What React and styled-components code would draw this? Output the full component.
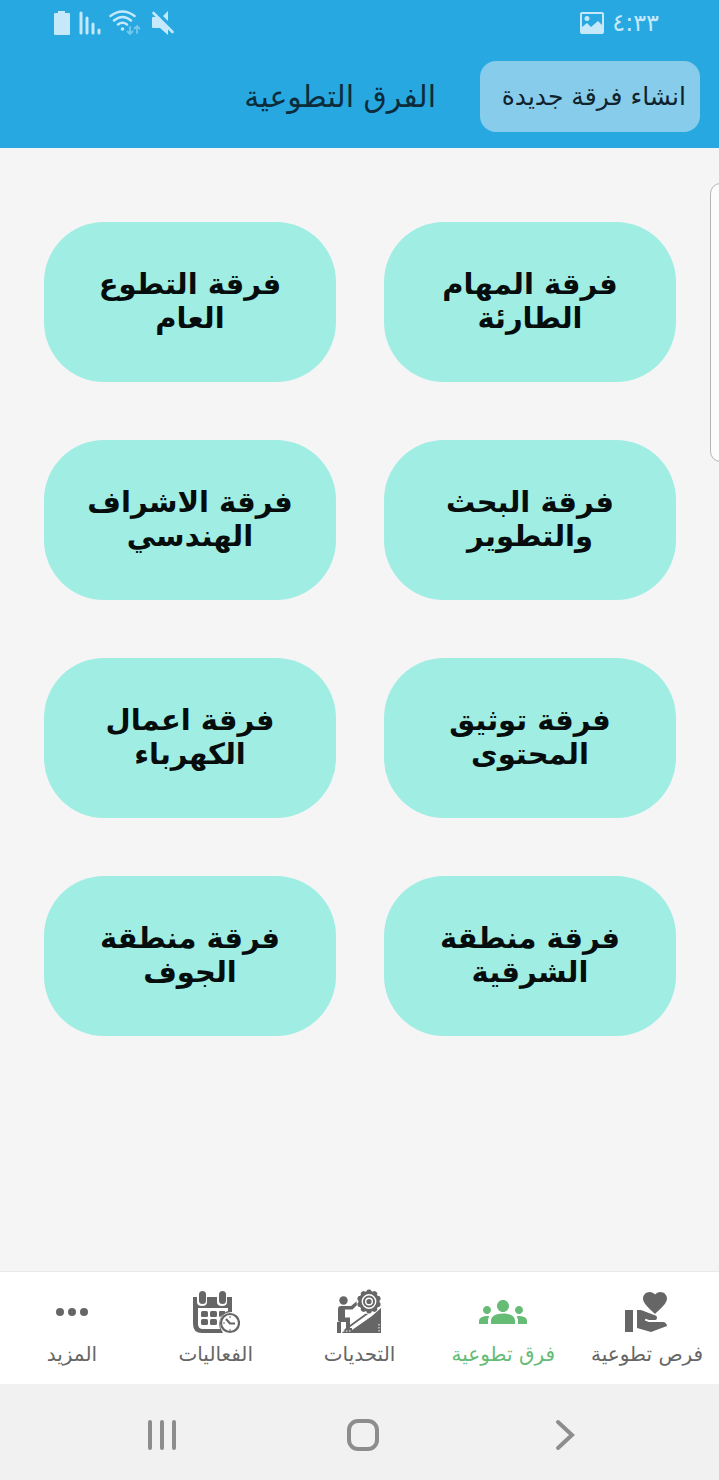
import React from "react";
import styled, { createGlobalStyle } from "styled-components";
import { MdGroups, MdVolunteerActivism } from "react-icons/md";

const GlobalStyle = createGlobalStyle`
  *, *::before, *::after { box-sizing: border-box; }
  body { margin: 0; background: #f5f5f5; font-family: "DejaVu Sans", sans-serif; }
  button { font: inherit; color: inherit; border: 0; margin: 0; cursor: pointer; }
`;

const Screen = styled.div`
  min-height: 100vh;
  display: flex;
  flex-direction: column;
  overflow-x: hidden;
`;

const TopBar = styled.header`
  background: #27a8e1;
  height: 148px;
`;

const StatusBar = styled.div`
  display: flex;
  align-items: center;
  justify-content: space-between;
  height: 46px;
  padding: 0 60px 0 53px;
  color: #c5e9fb;
  direction: ltr;
`;

const StatusGroup = styled.div`
  display: flex;
  align-items: center;
  gap: 8px;
`;

const Clock = styled.time`
  font-size: 24px;
  line-height: 24px;
  direction: ltr;
`;

const TitleRow = styled.div`
  display: flex;
  align-items: center;
  gap: 44px;
  padding: 15px 19px 0;
`;

const CreateButton = styled.button`
  width: 220px;
  height: 71px;
  padding: 0 14px;
  border-radius: 16px;
  background: #87cdeb;
  color: #10222c;
  font-size: 25px;
  line-height: 32px;
  text-align: start;
  white-space: nowrap;
`;

const Title = styled.h1`
  margin: 0;
  color: #0d2c3b;
  font-size: 30px;
  font-weight: 400;
  line-height: 36px;
  white-space: nowrap;
`;

const Main = styled.main`
  flex: 1;
  position: relative;
  padding: 74px 43px 74px 44px;
`;

const EdgePanel = styled.div`
  position: absolute;
  top: 35px;
  right: -12px;
  width: 21px;
  height: 279px;
  border: 1px solid #b4b4b4;
  border-radius: 12px;
  background: #fcfcfc;
`;

const TeamGrid = styled.div`
  display: grid;
  grid-template-columns: 1fr 1fr;
  gap: 58px 48px;
`;

const TeamCard = styled.button`
  height: 160px;
  padding: 0 16px 2px;
  border-radius: 60px;
  background: #a0ede4;
  color: #060d0c;
  font-size: 29px;
  font-weight: 700;
  line-height: 34px;
  white-space: pre-line;
`;

const TabBar = styled.nav`
  display: grid;
  grid-template-columns: repeat(5, 1fr);
  height: 113px;
  background: #fff;
  border-top: 1px solid #e9e9e9;
`;

const Tab = styled.a`
  display: flex;
  flex-direction: column;
  align-items: center;
  gap: 2px;
  padding-top: 16px;
  color: ${(p) => (p.$active ? "#66bb75" : "#666")};
  text-decoration: none;
  font-size: 20px;
  line-height: 32px;
  white-space: nowrap;
  svg { display: block; width: 48px; height: 48px; }
`;

const SystemBar = styled.div`
  display: flex;
  align-items: center;
  justify-content: space-between;
  height: 96px;
  padding: 6px 130px 0 138px;
  background: #f1f1f1;
  direction: ltr;
`;

const SystemButton = styled.button`
  width: 48px;
  height: 48px;
  padding: 0;
  background: none;
  svg { display: block; width: 48px; height: 48px; }
`;

const Battery = () => (
  <svg width="18" height="26" viewBox="0 0 18 26" fill="currentColor" aria-hidden="true">
    <path d="M5 1h7v2h4q1 0 1 1v20q0 1-1 1H2q-1 0-1-1V4q0-1 1-1h3z" />
  </svg>
);

const Signal = () => (
  <svg width="22" height="26" viewBox="0 0 22 26" stroke="currentColor" strokeWidth="3" strokeLinecap="round" aria-hidden="true">
    <path d="M2 3v20M8 8v15M14 14v9M20 20v3" />
  </svg>
);

const Wifi = () => (
  <svg width="34" height="26" viewBox="0 0 34 26" fill="none" stroke="currentColor" strokeWidth="2.5" strokeLinecap="round" aria-hidden="true">
    <path d="M1.500 6q12-9 24 0M5 10.500q8.500-7 17 0M9 14.500q4.500-3.500 9 0" />
    <circle cx="13.500" cy="19" r="1.800" fill="currentColor" stroke="none" />
    <path d="M21 17v7M18.500 21.500l2.500 2.500 2.500-2.500M28 23v-7M25.500 18.500l2.500-2.500 2.500 2.500" strokeWidth="1.800" opacity=".5" />
  </svg>
);

const Muted = () => (
  <svg width="24" height="26" viewBox="0 0 24 26" fill="currentColor" aria-hidden="true">
    <path d="M2 7h4l11 11v7l-8-7H2q-1 0-1-1V8q0-1 1-1zM12 6l5-5v10z" />
    <path d="M2.500 3l19 19" stroke="currentColor" strokeWidth="2.600" strokeLinecap="round" />
  </svg>
);

const Picture = () => (
  <svg width="24" height="24" viewBox="0 0 24 24" fill="currentColor" fillRule="evenodd" aria-hidden="true">
    <path d="M2 1h20q2 0 2 2v18q0 2-2 2H2q-2 0-2-2V3q0-2 2-2zM2 3v13l5-4 4 4 7-6 4 4V3zM7 5a2.500 2.500 0 1 1 0 5 2.500 2.500 0 0 1 0-5z" />
  </svg>
);

const MoreIcon = () => (
  <svg viewBox="0 0 48 48" fill="currentColor" aria-hidden="true">
    <circle cx="12" cy="24" r="4" />
    <circle cx="24" cy="24" r="4" />
    <circle cx="36" cy="24" r="4" />
  </svg>
);

const CalendarIcon = () => (
  <svg viewBox="0 0 48 48" fill="currentColor" aria-hidden="true">
    <path d="M1 9h4v5q0 4 5 4t5-4V9h10v5q0 4 5 4t5-4V9h5v15q-8 0-11 6-3 7 2 15H10q-9 0-9-9zM6 20v16q0 5 5 5h17q-2-6 1-12 3-5 7-6v-3z" fillRule="evenodd" />
    <rect x="7" y="3" width="7" height="13" rx="3.500" />
    <rect x="27" y="3" width="7" height="13" rx="3.500" />
    <rect x="9" y="23" width="7" height="6" rx="1.500" />
    <rect x="18" y="23" width="7" height="6" rx="1.500" />
    <path d="M28 23h5v2l-5 4q-1 0-1-1v-4q0-1 1-1z" />
    <rect x="9" y="31" width="7" height="6" rx="1.500" />
    <rect x="18" y="31" width="7" height="6" rx="1.500" />
    <circle cx="38" cy="35" r="9" fill="#fff" stroke="currentColor" strokeWidth="2.200" />
    <path d="M34 31l4 4.500h5" fill="none" stroke="currentColor" strokeWidth="2.200" />
    <path d="M38 28v2M38 41v2M31 35h2" stroke="currentColor" strokeWidth="1" />
  </svg>
);

const gearTeeth = Array.from({ length: 10 }, (_, i) => i * 36);

const ChallengeIcon = () => (
  <svg viewBox="0 0 48 48" fill="currentColor" aria-hidden="true">
    <circle cx="7.500" cy="12.500" r="4.200" />
    <path d="M2 21q0-3 3-3h10l6-5 1.500 2.500-6 6H9v8h5v14h-4V34H4q-2 0-2-2z" />
    <path d="M1 34h4v11H1zM10 40h6v5H6l2-3z" />
    <path d="M14 45l2-3L36 28l9-8v25z" />
    <path d="M14 38l18-13" stroke="currentColor" strokeWidth="1.800" strokeLinecap="round" />
    <path d="M7 43h8M43 36v8" stroke="#fff" strokeWidth="1" strokeDasharray="1.500 1.500" />
    <circle cx="33" cy="13.500" r="12.500" fill="#fff" />
    {gearTeeth.map((angle) => (
      <rect key={angle} x="30.500" y="1.500" width="5" height="4" rx="2" transform={`rotate(${angle} 33 13.500)`} />
    ))}
    <circle cx="33" cy="13.500" r="9" fill="none" stroke="currentColor" strokeWidth="3.200" />
    <circle cx="33" cy="13.500" r="5" fill="none" stroke="currentColor" strokeWidth="2" />
    <circle cx="33" cy="13.500" r="2.600" />
  </svg>
);

const RecentsIcon = () => (
  <svg viewBox="0 0 48 48" stroke="#8d8d8d" strokeWidth="4" strokeLinecap="round" aria-hidden="true">
    <path d="M12 11v26M24 11v26M36 11v26" />
  </svg>
);

const HomeIcon = () => (
  <svg viewBox="0 0 48 48" fill="none" stroke="#8d8d8d" strokeWidth="4" aria-hidden="true">
    <rect x="9" y="10" width="28" height="28" rx="9" />
  </svg>
);

const BackIcon = () => (
  <svg viewBox="0 0 48 48" fill="none" stroke="#8d8d8d" strokeWidth="4" strokeLinecap="round" aria-hidden="true">
    <path d="M17 11l14 13-14 13" />
  </svg>
);

const teams = [
  "فرقة المهام\nالطارئة",
  "فرقة التطوع\nالعام",
  "فرقة البحث\nوالتطوير",
  "فرقة الاشراف\nالهندسي",
  "فرقة توثيق\nالمحتوى",
  "فرقة اعمال\nالكهرباء",
  "فرقة منطقة\nالشرقية",
  "فرقة منطقة\nالجوف",
];

const tabs = [
  { id: "opportunities", label: "فرص تطوعية", Icon: MdVolunteerActivism },
  { id: "teams", label: "فرق تطوعية", Icon: MdGroups, active: true },
  { id: "challenges", label: "التحديات", Icon: ChallengeIcon },
  { id: "events", label: "الفعاليات", Icon: CalendarIcon },
  { id: "more", label: "المزيد", Icon: MoreIcon },
];

export default function App() {
  return (
    <Screen dir="rtl" lang="ar">
      <GlobalStyle />
      <TopBar>
        <StatusBar>
          <StatusGroup>
            <Battery />
            <Signal />
            <Wifi />
            <Muted />
          </StatusGroup>
          <StatusGroup>
            <Picture />
            <Clock>٤:٣٣</Clock>
          </StatusGroup>
        </StatusBar>
        <TitleRow>
          <CreateButton type="button">انشاء فرقة جديدة</CreateButton>
          <Title>الفرق التطوعية</Title>
        </TitleRow>
      </TopBar>
      <Main>
        <TeamGrid>
          {teams.map((name) => (
            <TeamCard type="button" key={name}>{name}</TeamCard>
          ))}
        </TeamGrid>
        <EdgePanel />
      </Main>
      <TabBar>
        {tabs.map(({ id, label, Icon, active }) => (
          <Tab key={id} href={`#${id}`} $active={active} aria-current={active ? "page" : undefined}>
            <Icon />
            {label}
          </Tab>
        ))}
      </TabBar>
      <SystemBar>
        <SystemButton type="button" aria-label="التطبيقات الأخيرة"><RecentsIcon /></SystemButton>
        <SystemButton type="button" aria-label="الرئيسية"><HomeIcon /></SystemButton>
        <SystemButton type="button" aria-label="رجوع"><BackIcon /></SystemButton>
      </SystemBar>
    </Screen>
  );
}
